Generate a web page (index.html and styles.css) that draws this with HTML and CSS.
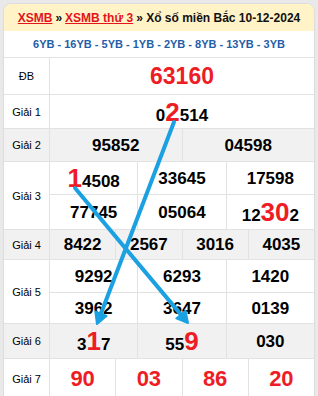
FILE: index.html
```html
<!DOCTYPE html>
<html lang="vi">
<head>
<meta charset="utf-8">
<title>XSMB 10-12-2024</title>
<link rel="stylesheet" href="styles.css">
</head>
<body>
<div class="page">
  <div class="board">
    <div class="head"><a href="#">XSMB</a> » <a href="#">XSMB thứ 3</a> » Xổ số miền Bắc 10-12-2024</div>
    <div class="codes">6YB - 16YB - 5YB - 1YB - 2YB - 8YB - 13YB - 3YB</div>

    <div class="row r-db">
      <div class="lbl">ĐB</div>
      <div class="cells c1"><div class="cell"><span class="big red">63160</span></div></div>
    </div>
    <div class="row r-g1">
      <div class="lbl">Giải 1</div>
      <div class="cells c1"><div class="cell"><span class="num">0<span class="hl">2</span>514</span></div></div>
    </div>
    <div class="row r-g2 gray">
      <div class="lbl">Giải 2</div>
      <div class="cells c2">
        <div class="cell"><span class="num">95852</span></div>
        <div class="cell"><span class="num">04598</span></div>
      </div>
    </div>
    <div class="row r-g3">
      <div class="lbl">Giải 3</div>
      <div class="cells c3 two">
        <div class="cell"><span class="num"><span class="hl">1</span>4508</span></div>
        <div class="cell"><span class="num">33645</span></div>
        <div class="cell"><span class="num">17598</span></div>
        <div class="cell"><span class="num">77745</span></div>
        <div class="cell"><span class="num">05064</span></div>
        <div class="cell"><span class="num">12<span class="hl">30</span>2</span></div>
      </div>
    </div>
    <div class="row r-g4 gray">
      <div class="lbl">Giải 4</div>
      <div class="cells c4">
        <div class="cell"><span class="num">8422</span></div>
        <div class="cell"><span class="num">2567</span></div>
        <div class="cell"><span class="num">3016</span></div>
        <div class="cell"><span class="num">4035</span></div>
      </div>
    </div>
    <div class="row r-g5">
      <div class="lbl">Giải 5</div>
      <div class="cells c3 two">
        <div class="cell"><span class="num">9292</span></div>
        <div class="cell"><span class="num">6293</span></div>
        <div class="cell"><span class="num">1420</span></div>
        <div class="cell"><span class="num">3962</span></div>
        <div class="cell"><span class="num">3647</span></div>
        <div class="cell"><span class="num">0139</span></div>
      </div>
    </div>
    <div class="row r-g6 gray">
      <div class="lbl">Giải 6</div>
      <div class="cells c3">
        <div class="cell"><span class="num">3<span class="hl">1</span>7</span></div>
        <div class="cell"><span class="num">55<span class="hl">9</span></span></div>
        <div class="cell"><span class="num">030</span></div>
      </div>
    </div>
    <div class="row r-g7">
      <div class="lbl">Giải 7</div>
      <div class="cells c4">
        <div class="cell"><span class="big red">90</span></div>
        <div class="cell"><span class="big red">03</span></div>
        <div class="cell"><span class="big red">86</span></div>
        <div class="cell"><span class="big red">20</span></div>
      </div>
    </div>
  </div>

  <svg class="arrows" width="318" height="396" viewBox="0 0 318 396" aria-hidden="true">
    <g stroke="#1ba1e2" stroke-width="4" stroke-linecap="round" fill="none">
      <line x1="174" y1="122" x2="100.9" y2="313.7"/>
      <line x1="75" y1="188" x2="180.9" y2="314.6"/>
    </g>
    <g fill="#1ba1e2" stroke="#1ba1e2" stroke-width="2" stroke-linejoin="round">
      <polygon points="97,324 106.5,315.9 95.3,311.6"/>
      <polygon points="188,323 185.5,310.7 176.3,318.4"/>
    </g>
  </svg>
</div>
</body>
</html>
```
FILE: styles.css
```css
html, body {
  margin: 0;
  padding: 0;
  background: #e9e9e9;
}
body {
  font-family: "Liberation Sans", Arial, sans-serif;
  color: #000;
}
.page {
  position: relative;
  width: 318px;
  height: 396px;
  padding: 3px 3px 0;
  box-sizing: border-box;
  overflow: hidden;
}
.board {
  background: #fff;
  border: 1px solid #dcdcdc;
  border-radius: 8px 8px 0 0;
  overflow: hidden;
}
.head {
  height: 27px;
  background: #fff3c7;
  display: flex;
  align-items: center;
  justify-content: center;
  font-size: 12px;
  font-weight: bold;
  color: #111;
  white-space: nowrap;
}
.head a {
  color: #e3141c;
  text-decoration: underline;
  margin: 0 3px;
}
.head a:first-child { margin-left: 0; }
.codes {
  height: 26px;
  display: flex;
  align-items: center;
  justify-content: center;
  font-size: 11px;
  font-weight: bold;
  color: #1f5ea8;
  white-space: nowrap;
}
.row {
  display: flex;
  border-top: 1px solid #e2e2e2;
  box-sizing: border-box;
}
.row.gray, .row.gray .cell { background: #f1f1f1; }
.lbl {
  width: 45px;
  flex: none;
  border-right: 1px solid #e2e2e2;
  display: flex;
  align-items: center;
  justify-content: center;
  font-size: 11px;
}
.cells {
  flex: 1;
  display: grid;
  gap: 1px;
  background: #e2e2e2;
}
.c1 { grid-template-columns: 1fr; }
.c2 { grid-template-columns: 1fr 1fr; }
.c3 { grid-template-columns: 1fr 1fr 1fr; }
.c4 { grid-template-columns: 1fr 1fr 1fr 1fr; }
.cell {
  background: #fff;
  display: flex;
  align-items: center;
  justify-content: center;
  white-space: nowrap;
}
.num {
  font-size: 17px;
  font-weight: bold;
  line-height: 1;
}
.hl {
  color: #ee1c25;
  font-size: 26px;
  font-weight: bold;
  line-height: 1;
}
.big {
  font-size: 22px;
  font-weight: bold;
  line-height: 1;
}
.red { color: #ee1c25; }

.r-db { height: 37px; }
.r-db .big { font-size: 23px; }
.r-g1 { height: 34px; }
.r-g2 { height: 33px; }
.r-g3 .cells { grid-template-rows: 32px 34px; }
.r-g4 { height: 30px; }
.r-g5 .cells { grid-template-rows: 32px 30px; }
.r-g6 { height: 35px; }
.r-g7 { height: 40px; }

.arrows {
  position: absolute;
  top: 0;
  left: 0;
  pointer-events: none;
}
```
